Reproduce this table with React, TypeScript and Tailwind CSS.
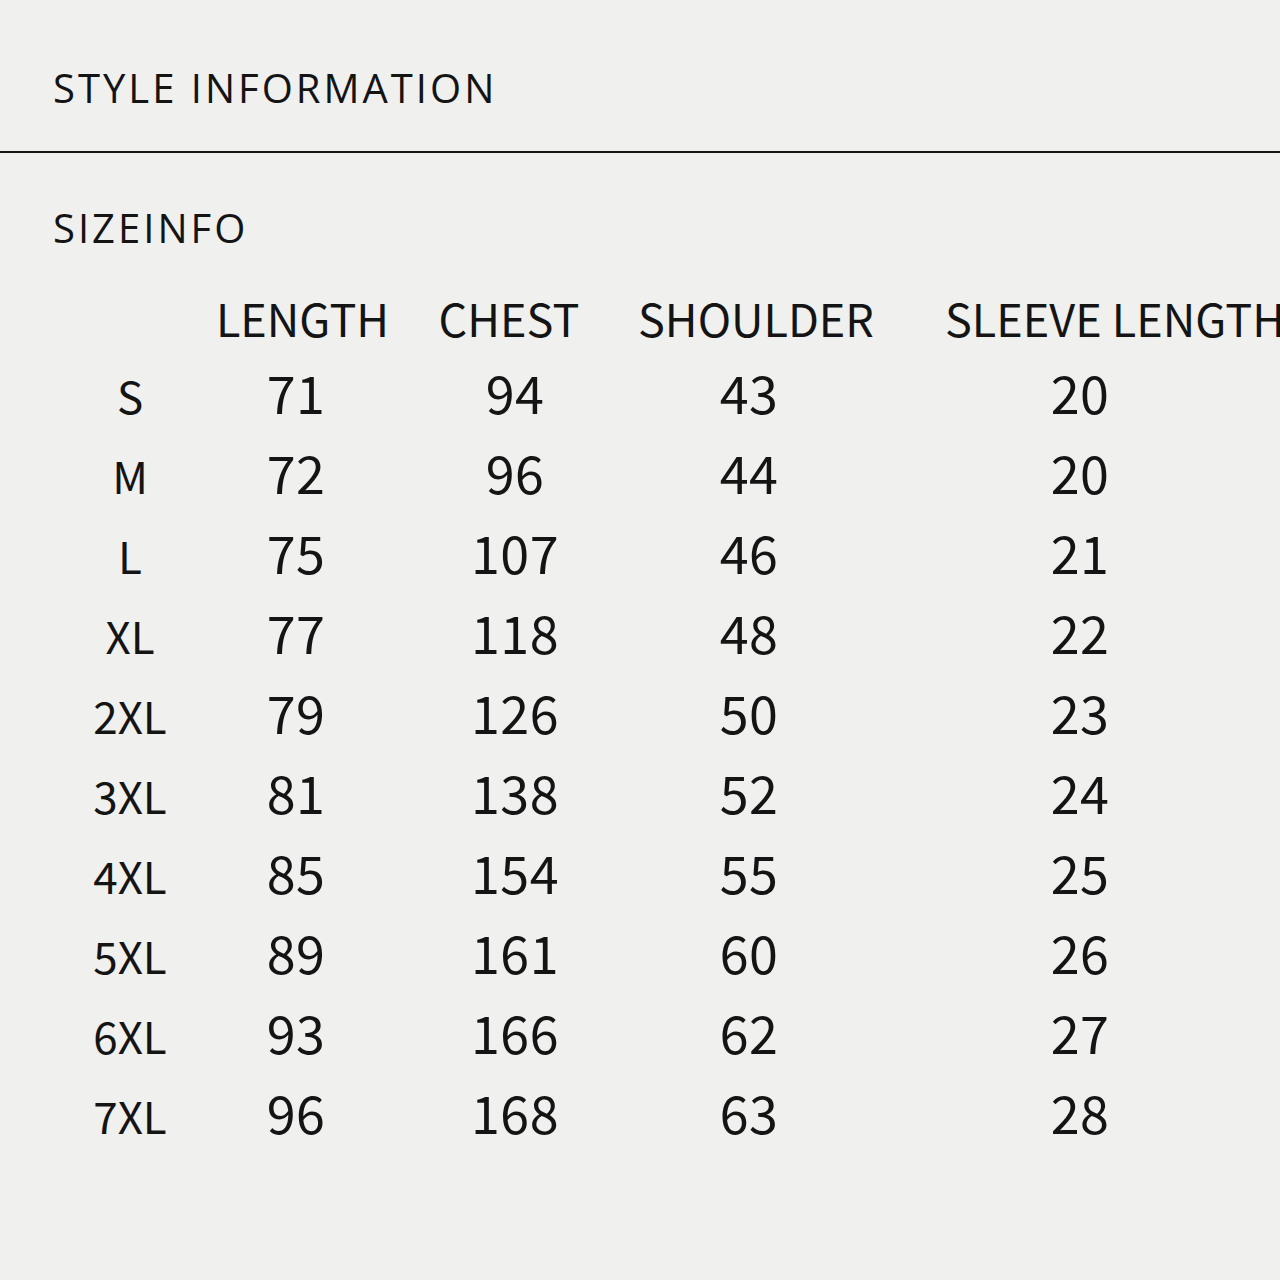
import React from "react";

const rows: string[][] = [
  ["S", "71", "94", "43", "20"],
  ["M", "72", "96", "44", "20"],
  ["L", "75", "107", "46", "21"],
  ["XL", "77", "118", "48", "22"],
  ["2XL", "79", "126", "50", "23"],
  ["3XL", "81", "138", "52", "24"],
  ["4XL", "85", "154", "55", "25"],
  ["5XL", "89", "161", "60", "26"],
  ["6XL", "93", "166", "62", "27"],
  ["7XL", "96", "168", "63", "28"],
];

export default function App() {
  return (
    <div className="w-[1280px] h-[1280px] overflow-hidden bg-[#f0f0ef] text-[#141414]">
      <div className="h-[151px] pt-[68px] pl-[53px] font-['Open_Sans',sans-serif] font-medium text-[40px] leading-[40px] tracking-[3px] whitespace-nowrap">
        STYLE INFORMATION
      </div>
      <div className="h-[2px] bg-[#141414]" />
      <div className="mt-[55px] pl-[53px] font-['Open_Sans',sans-serif] font-medium text-[40px] leading-[40px] tracking-[3px] whitespace-nowrap">
        SIZEINFO
      </div>
      <div className="font-['Noto_Sans_CJK_SC','Noto_Sans',sans-serif]">
        <div className="mt-[47px] flex pl-[200px] text-[45px] leading-[45px] tracking-[0px] whitespace-nowrap">
          <div className="w-[205px] shrink-0 text-center">LENGTH</div>
          <div className="w-[208px] shrink-0 text-center">CHEST</div>
          <div className="w-[286px] shrink-0 text-center">SHOULDER</div>
          <div className="shrink-0 pl-[46px]">SLEEVE LENGTH</div>
        </div>
        <div className="mt-[12px] flex flex-col pl-[80px]">
          {rows.map((r) => (
            <div key={r[0]} className="flex h-[80px] items-baseline leading-[80px]">
              <div className="w-[100px] shrink-0 text-center text-[44px]">{r[0]}</div>
              <div className="w-[232px] shrink-0 text-center text-[52px] tracking-[0.5px]">{r[1]}</div>
              <div className="w-[206px] shrink-0 text-center text-[52px] tracking-[0.5px]">{r[2]}</div>
              <div className="w-[262px] shrink-0 text-center text-[52px] tracking-[0.5px]">{r[3]}</div>
              <div className="w-[400px] shrink-0 text-center text-[52px] tracking-[0.5px]">{r[4]}</div>
            </div>
          ))}
        </div>
      </div>
    </div>
  );
}
